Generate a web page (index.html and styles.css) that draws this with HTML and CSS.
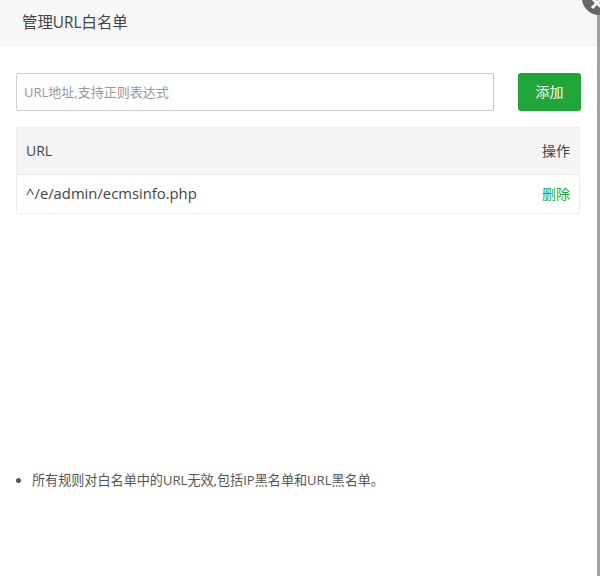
FILE: index.html
```html
<!DOCTYPE html>
<html lang="zh-CN">
<head>
<meta charset="utf-8">
<title>管理URL白名单</title>
<link rel="stylesheet" href="styles.css">
</head>
<body>
<div class="dialog">
  <header class="title">管理URL白名单</header>
  <main class="content">
    <form class="add-row">
      <input class="url-input" type="text" placeholder="URL地址,支持正则表达式">
      <button class="add-btn" type="button">添加</button>
    </form>
    <table class="rules">
      <thead>
        <tr><th class="col-url">URL</th><th class="col-op">操作</th></tr>
      </thead>
      <tbody>
        <tr><td class="col-url">^/e/admin/ecmsinfo.php</td><td class="col-op"><a class="del" href="#">删除</a></td></tr>
      </tbody>
    </table>
    <ul class="notes">
      <li>所有规则对白名单中的URL无效,包括IP黑名单和URL黑名单。</li>
    </ul>
  </main>
  <button class="close" type="button" aria-label="关闭">
    <svg class="close-x" viewBox="0 0 16 16" width="16" height="16"><path d="M3 3L13 13M13 3L3 13" stroke="#fff" stroke-width="3" fill="none"/></svg>
  </button>
</div>
</body>
</html>
```
FILE: styles.css
```css
* { box-sizing: border-box; }
html, body { margin: 0; height: 100%; overflow: hidden; background: #fff; }
body { font-family: "Open Sans", "Noto Sans CJK SC", sans-serif; color: #555; font-size: 12px; }
.dialog { position: relative; width: 600px; height: 576px; background: #fff; border-right: 3px solid #a0a0a0; }
.title { height: 46px; padding-left: 22px; background: #f7f7f7; border-bottom: 1px solid #eee; font-size: 15.4px; line-height: 46px; color: #444; }
.content { padding: 27px 16px 0 16px; display: flex; flex-direction: column; height: 530px; }
.add-row { display: flex; justify-content: space-between; align-items: flex-start; }
.url-input { width: 478px; height: 38px; padding: 0 7px; border: 1px solid #ccc; border-radius: 2px; font: 13px "Open Sans", "Noto Sans CJK SC", sans-serif; color: #555; outline: none; }
.url-input::placeholder { color: #999; opacity: 1; }
.add-btn { width: 63px; height: 38px; border: 0; border-radius: 3px; background: #20a53a; color: #fff; font: 14px/38px "Open Sans", "Noto Sans CJK SC", sans-serif; padding: 0; }
.rules { width: 564px; margin-top: 16px; border-collapse: collapse; border: 1px solid #eee; font-size: 14px; color: #444; }
.rules th { height: 47px; background: #f5f5f5; border-bottom: 1px solid #eee; font-weight: 400; padding: 0 9px 2px; }
.rules td { height: 39px; border-bottom: 1px solid #eee; padding: 0 9px 2px; font-size: 14.8px; }
.col-url { text-align: left; }
.col-op { text-align: right; }
.rules td.col-op { font-size: 14px; }
.del { color: #20a53a; text-decoration: none; font-size: 14px; }
.notes { margin: 257px 0 0; padding-left: 16px; font-size: 13.1px; color: #555; line-height: 18px; }
.close { position: absolute; top: -19px; left: 582px; width: 34px; height: 34px; border: 0; border-radius: 50%; background: #666; padding: 0; }
.close-x { position: absolute; left: 7px; top: 14px; }
```
